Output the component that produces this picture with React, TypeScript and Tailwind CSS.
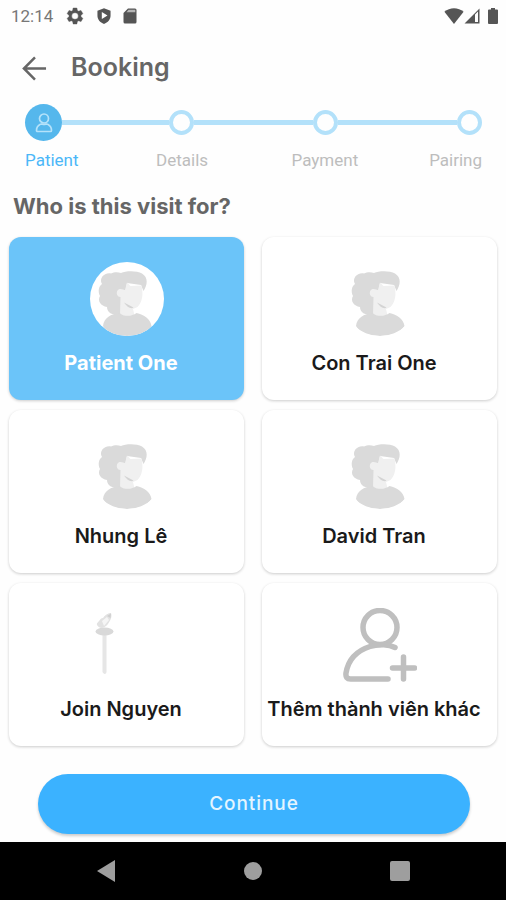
import { useState } from "react";
import clsx from "clsx";

const steps = ["Patient", "Details", "Payment", "Pairing"];

const members = [
    { id: "patient-one", name: "Patient One", art: "portrait" },
    { id: "con-trai-one", name: "Con Trai One", art: "portrait" },
    { id: "nhung-le", name: "Nhung Lê", art: "portrait" },
    { id: "david-tran", name: "David Tran", art: "portrait" },
    { id: "join-nguyen", name: "Join Nguyen", art: "tiny" },
    { id: "add", name: "Thêm thành viên khác", art: "add" },
];

const Portrait = () => (
    <svg viewBox="0 0 74 74" className="size-full" aria-hidden="true">
        <path
            fill="#dadada"
            d="M31 11C36 8.500 47 8.500 52 11.500C58.500 15.500 57.500 23 53.500 29L51 23L37 21L31 52L27 52C22 53.500 17 50 17 45C11 44 7 39 10 34C7.500 29 9 24 12 22C8.500 16 15 10 21 11.500C24 10 28 10 31 11Z"
        />
        <path
            fill="#f0f0f0"
            d="M37 20.500L40.500 24L51.500 23.500C53.500 32 52.500 40 47.500 45L43 47L44.500 53L37 55L30 52.500L30.500 35C26 35 25.500 28 29.500 27C32 26.500 34 28 35 28Z"
        />
        <path fill="#d4d4d4" d="M34 40.500L43.500 45.500C41 47.500 37 45 34 40.500Z" />
        <path
            fill="#dadada"
            d="M13 64C14 55.500 21 52 29.500 51C34 55 42 54.500 46.500 51C54 52.500 60.500 57 61.500 64C57 71 47 74 37 74C27 74 17 71 13 64Z"
        />
    </svg>
);

const TinyPortrait = () => (
    <svg viewBox="0 0 74 74" className="size-full" aria-hidden="true">
        <path fill="#e6e6e6" d="M12.500 26H16.500V64Q16.500 66 14.500 66Q12.500 66 12.500 64Z" />
        <ellipse cx="14.500" cy="23.500" rx="9" ry="4" fill="#d9d9d9" />
        <path fill="#e2e2e2" d="M7 17C6 13 9 10 13 10C15 7 18 4.500 21 5C22.500 9 20 13 18 16C15 20 10 22 7 17Z" />
        <path fill="#f5f5f5" d="M12 13L17 9L19 12L14 18Z" />
        <path fill="#cfcfcf" d="M17 8L21 5.500L20.500 10Z" />
    </svg>
);

const AddMember = () => (
    <svg
        viewBox="0 0 74 74"
        className="size-full"
        fill="none"
        stroke="#bfbfbf"
        strokeWidth="5.500"
        strokeLinecap="round"
        strokeLinejoin="round"
        aria-hidden="true"
    >
        <circle cx="37" cy="19.500" r="17" />
        <path d="M52 39.500C46 36.500 36 35.500 27 38.500C13 43 5 53 3 65C2.500 69 4 71 7.500 71H45" />
        <path d="M60.500 49V71M49.500 60H71.500" />
    </svg>
);

const StatusBar = () => (
    <div className="flex h-8 items-center justify-between pl-[11px] pr-2 text-[#555]">
        <div className="flex items-center gap-3">
            <span className="font-[Roboto,sans-serif] text-[17px] leading-5 text-[#777]">12:14</span>
            <svg
                viewBox="0 0 24 24"
                className="size-5"
                fill="currentColor"
                stroke="currentColor"
                strokeWidth="0.500"
                aria-hidden="true"
            >
                <path
                    fillRule="evenodd"
                    d="M19.140 12.940c.04-.3.06-.61.06-.94s-.02-.64-.07-.94l2.030-1.580a.49.49 0 0 0 .12-.61l-1.920-3.320a.49.49 0 0 0-.59-.22l-2.390.96a7 7 0 0 0-1.620-.94l-.36-2.540a.48.48 0 0 0-.48-.41h-3.840a.48.48 0 0 0-.47.41l-.36 2.540a7.200 7.200 0 0 0-1.620.94l-2.390-.96a.48.48 0 0 0-.59.22L2.730 8.870a.48.48 0 0 0 .12.61l2.030 1.580a6 6 0 0 0 0 1.880l-2.030 1.580a.49.49 0 0 0-.12.61l1.920 3.320c.12.22.37.29.59.22l2.390-.96c.5.38 1.030.7 1.620.94l.36 2.540c.05.24.24.41.48.41h3.840c.24 0 .44-.17.47-.41l.36-2.540a7 7 0 0 0 1.620-.94l2.390.96c.22.08.47 0 .59-.22l1.920-3.320a.48.48 0 0 0-.12-.61zM12 16a4 4 0 1 1 0-8 4 4 0 0 1 0 8z"
                />
            </svg>
            <svg viewBox="0 0 16 18" className="h-4 w-3.5" fill="currentColor" aria-hidden="true">
                <path fillRule="evenodd" d="M8 0L15.500 3V8.500C15.500 13 12.500 16.500 8 18C3.500 16.500.5 13 .5 8.500V3ZM5.500 4.500V12.500L12 8.500Z" />
            </svg>
            <svg viewBox="0 0 14 16" className="h-4 w-3.5" fill="currentColor" aria-hidden="true">
                <path d="M5 .5H12Q13.500 .5 13.500 2V14Q13.500 15.500 12 15.500H2Q.5 15.500 .5 14V5Z" />
                <path fill="#b5b5b5" d="M5.500 1.800H12.300V4.200H3.500Z" />
            </svg>
        </div>
        <div className="flex items-center">
            <svg viewBox="0 0 18 15" className="h-4 w-5" fill="currentColor" aria-hidden="true">
                <path d="M0 3.500C5-1 13-1 18 3.500L9 15Z" />
            </svg>
            <svg viewBox="0 0 16 16" className="size-4" fill="currentColor" aria-hidden="true">
                <path fillRule="evenodd" d="M15.500 .5V15.500H.5ZM11 6.500V14H14V3.500Z" />
            </svg>
            <svg viewBox="0 0 10 16" className="ml-2 h-4 w-2.5" fill="currentColor" aria-hidden="true">
                <path d="M3 0H7V1.500H9Q10 1.500 10 2.500V15Q10 16 9 16H1Q0 16 0 15V2.500Q0 1.500 1 1.500H3Z" />
            </svg>
        </div>
    </div>
);

const Stepper = () => (
    <div className="pl-[25px] pr-6">
        <div className="flex items-center">
            <div className="flex size-[37px] items-center justify-center rounded-full bg-[#55b7ec]">
                <svg
                    viewBox="0 0 20 20"
                    className="size-5"
                    fill="none"
                    stroke="#b5e2fa"
                    strokeWidth="1.700"
                    strokeLinejoin="round"
                    aria-hidden="true"
                >
                    <circle cx="10" cy="5.500" r="4.500" />
                    <path d="M6 11.500C7 10.500 8 11.300 10 11.300C12 11.300 13 10.500 14 11.500C16 12.500 17.500 14.500 17.500 17.500Q17.500 18.500 16.500 18.500H3.500Q2.500 18.500 2.500 17.500C2.500 14.500 4 12.500 6 11.500Z" />
                </svg>
            </div>
            {steps.slice(1).map((step) => (
                <div key={step} className={clsx("flex basis-6 items-center", step === "Details" ? "grow-[107]" : "grow-[119]")}>
                    <div className="h-[5px] grow bg-[#b3e1fa]" />
                    <div className="size-[25px] rounded-full border-4 border-[#b3e1fa]" />
                </div>
            ))}
        </div>
        <ol className="mt-[7px] grid grid-cols-[3fr_5fr_5fr_3fr] text-center font-[Roboto,sans-serif] text-[17px] leading-6 text-[#bdbdbd]">
            {steps.map((step) => (
                <li key={step} className="first:text-left first:text-[#4bb7f8] last:text-right">
                    {step}
                </li>
            ))}
        </ol>
    </div>
);

export default function App() {
    const [selected, setSelected] = useState("patient-one");

    return (
        <div className="flex min-h-screen flex-col bg-[#fefefe] font-[Inter,sans-serif]">
            <StatusBar />

            <header className="flex h-[72px] items-center gap-6 pl-[22px]">
                <button type="button" aria-label="Back" className="text-[#666]">
                    <svg
                        viewBox="0 0 26 26"
                        className="size-[25px]"
                        fill="none"
                        stroke="currentColor"
                        strokeWidth="2.600"
                        aria-hidden="true"
                    >
                        <path d="M25 13H2M13.500 1.500L2 13L13.500 24.500" />
                    </svg>
                </button>
                <h1 className="text-[25px] font-semibold text-[#666]">Booking</h1>
            </header>

            <main className="flex grow flex-col">
                <Stepper />

                <h2 className="mt-[18px] px-[13px] text-[22px] leading-8 font-bold text-[#666]">Who is this visit for?</h2>

                <div className="mt-[15px] grid grid-cols-2 gap-x-[18px] gap-y-[10px] px-[9px]">
                    {members.map(({ id, name, art }) => (
                        <button
                            key={id}
                            type="button"
                            aria-pressed={selected === id}
                            onClick={() => setSelected(id)}
                            className={clsx(
                                "flex h-[163px] flex-col items-center rounded-xl pt-[25px] text-xl leading-7 shadow-[0_1px_3px_rgba(0,0,0,0.2)]",
                                selected === id ? "bg-[#6bc4f9] font-bold text-white" : "bg-white font-semibold text-[#1a1a1a]"
                            )}
                        >
                            <span className={clsx("size-[74px] overflow-hidden", art !== "add" && "rounded-full bg-white")}>
                                {art === "portrait" && <Portrait />}
                                {art === "tiny" && <TinyPortrait />}
                                {art === "add" && <AddMember />}
                            </span>
                            <span className="mt-[13px] w-full pr-[11px] whitespace-nowrap">{name}</span>
                        </button>
                    ))}
                </div>

                <div className="mt-auto pt-6 pr-9 pb-2 pl-[38px]">
                    <button
                        type="button"
                        className="h-[60px] w-full rounded-full bg-[#3bb2ff] text-[19px] font-medium tracking-wider text-[#e4f5ff] shadow-[0_2px_3px_rgba(0,0,0,0.2)]"
                    >
                        Continue
                    </button>
                </div>
            </main>

            <nav className="grid h-[58px] grid-cols-3 items-center justify-items-center bg-black px-8 text-[#9e9e9e]">
                <button type="button" aria-label="System back">
                    <svg viewBox="0 0 20 22" className="h-[22px] w-5" fill="currentColor" aria-hidden="true">
                        <path d="M19 0V22L1 11Z" />
                    </svg>
                </button>
                <button type="button" aria-label="Home" className="size-[18px] rounded-full bg-[#9e9e9e]" />
                <button type="button" aria-label="Recent apps" className="size-5 rounded-xs bg-[#9e9e9e]" />
            </nav>
        </div>
    );
}
